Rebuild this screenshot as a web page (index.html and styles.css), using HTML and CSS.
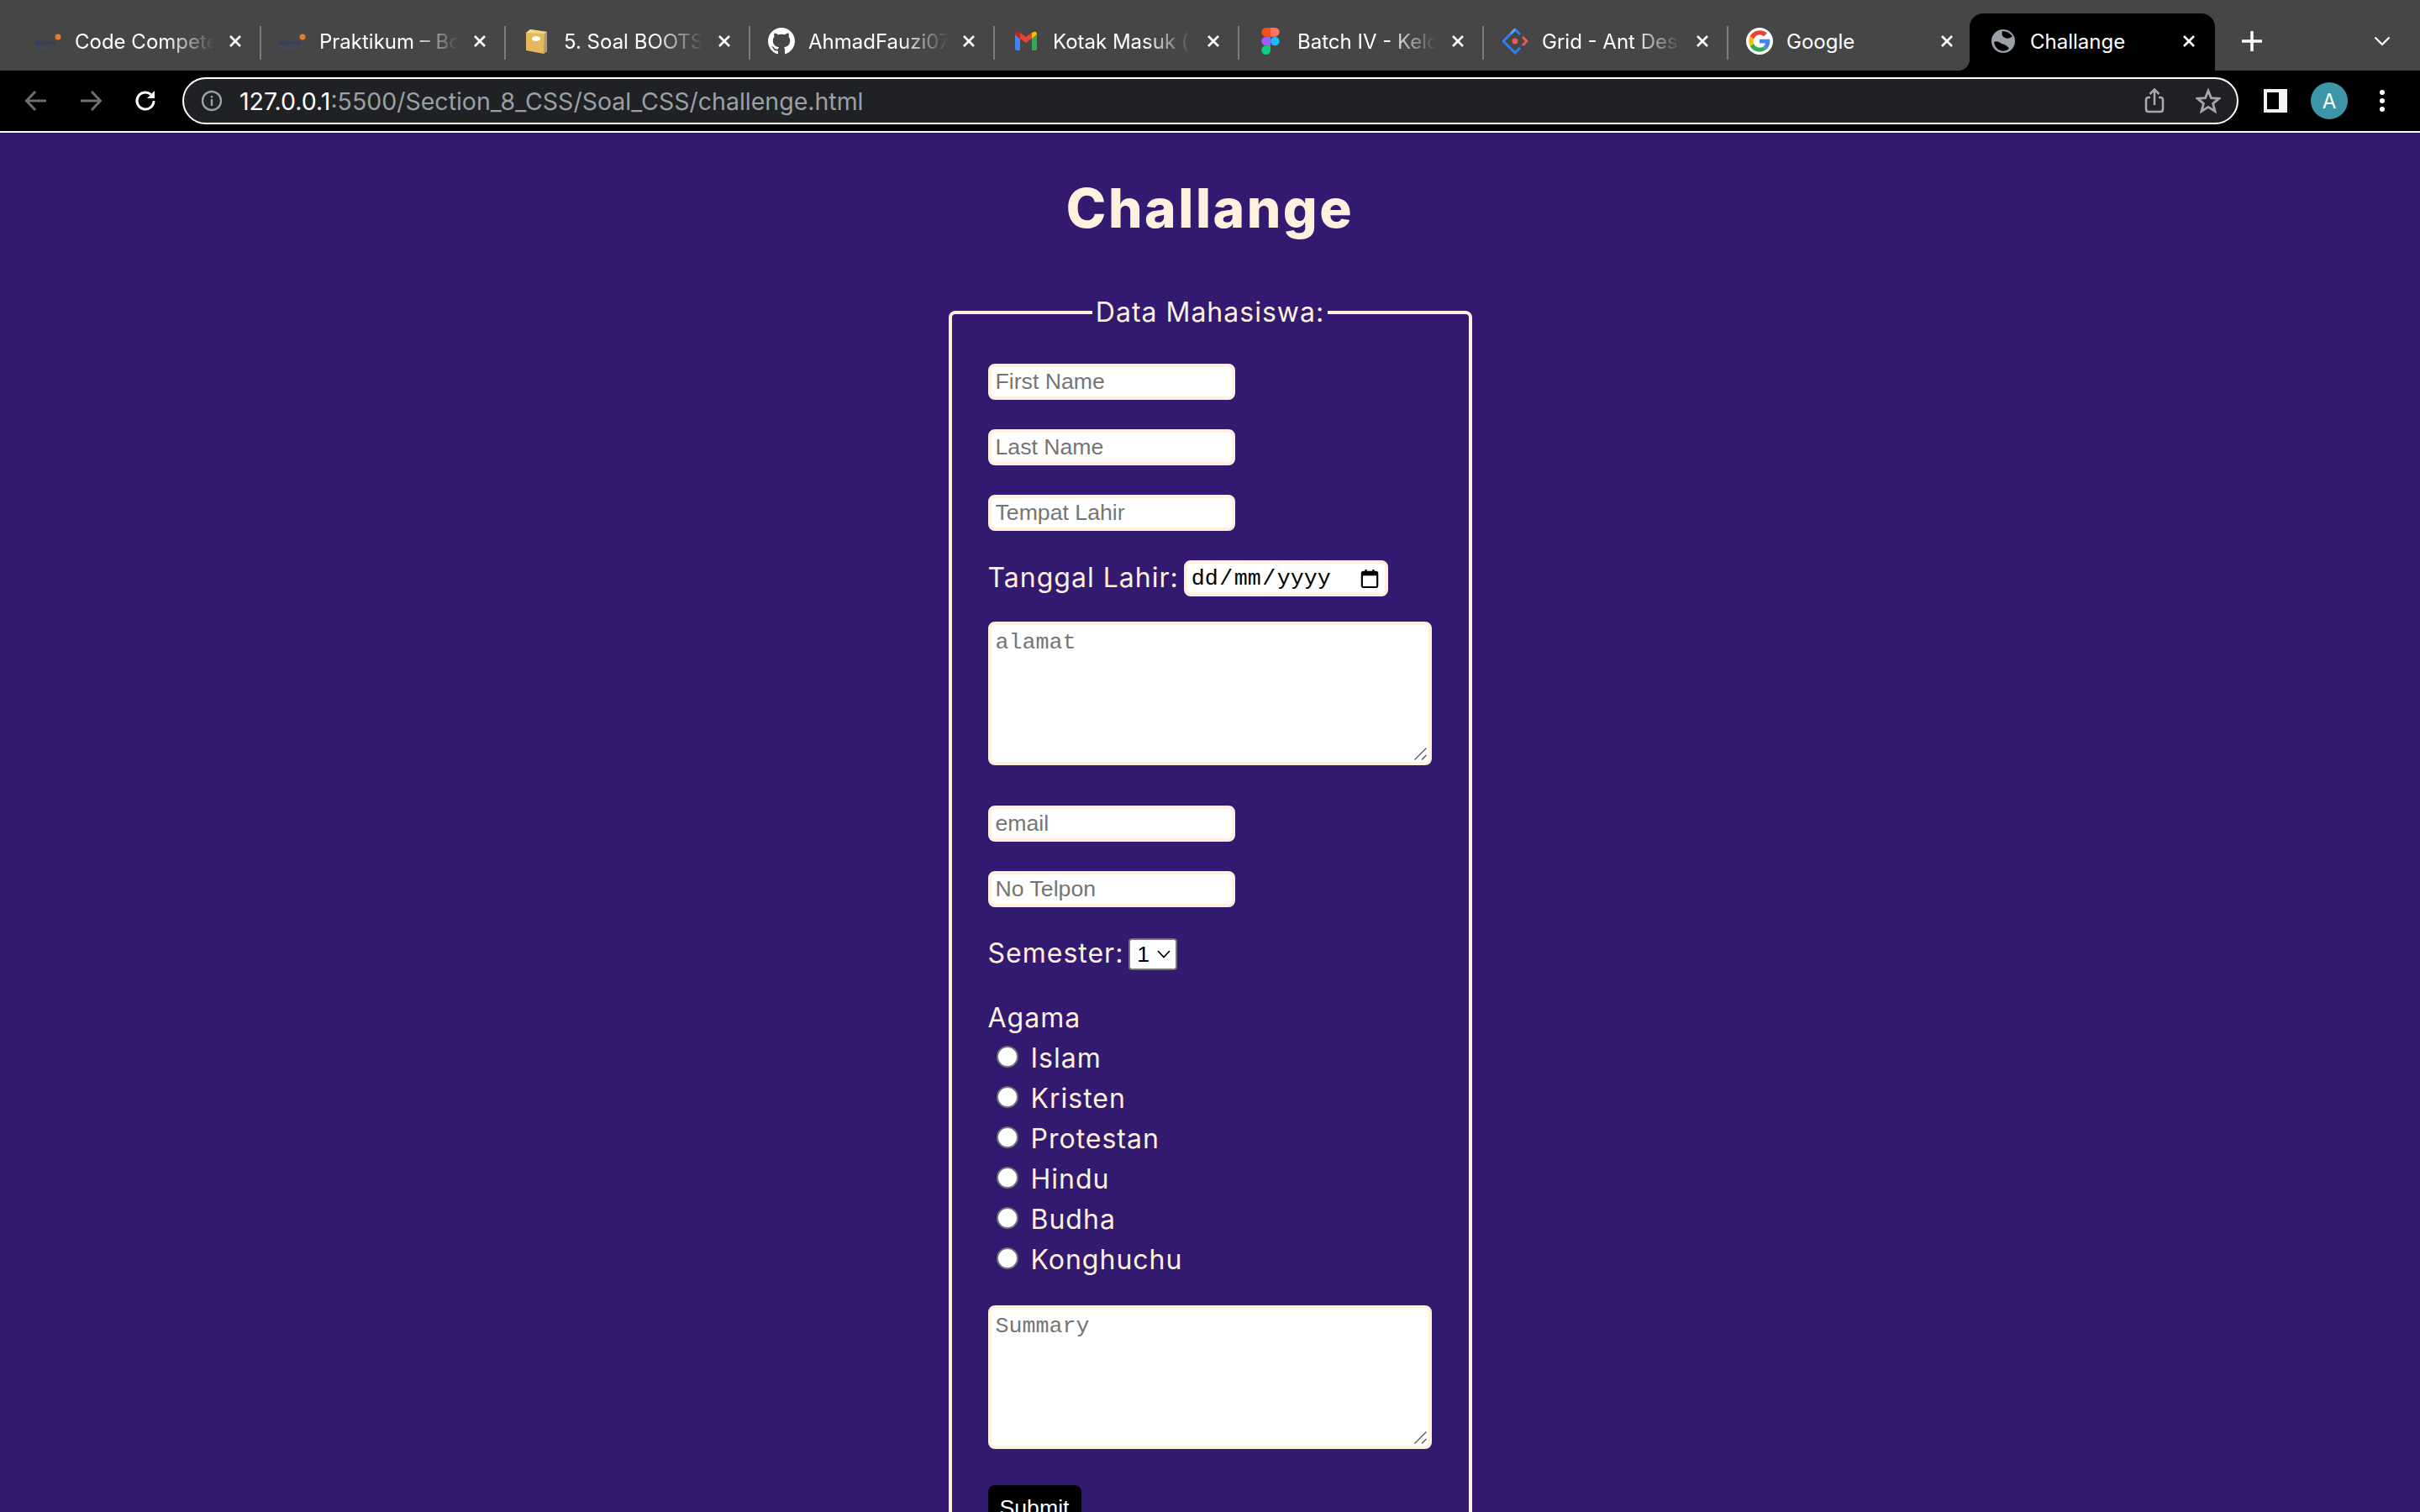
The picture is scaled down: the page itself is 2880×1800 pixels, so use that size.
FILE: index.html
```html
<!DOCTYPE HTML>
<html>
    <head>
        <title>Challange</title>
        <link rel="stylesheet" href="styles.css">
    </head>

    <body>
        <div class="tabstrip">
            <div class="tab">
                <svg class="favicon" viewBox="0 0 32 32"><text x="0" y="20" font-size="8" font-family="Liberation Sans" font-weight="700" fill="#2a3a72">alterra</text><circle cx="28" cy="11" r="3.5" fill="#e8792e"/><rect x="1" y="24" width="20" height="2" fill="#3f4a63"/></svg>
                <span class="tab-title">Code Compete</span>
                <svg class="tab-close" viewBox="0 0 16 16"><path d="M2 2L14 14M14 2L2 14" stroke="#fff" stroke-width="2.6"/></svg>
            </div>
            <div class="tab">
                <svg class="favicon" viewBox="0 0 32 32"><text x="0" y="20" font-size="8" font-family="Liberation Sans" font-weight="700" fill="#2a3a72">alterra</text><circle cx="28" cy="11" r="3.5" fill="#e8792e"/><rect x="1" y="24" width="20" height="2" fill="#3f4a63"/></svg>
                <span class="tab-title">Praktikum – Bo</span>
                <svg class="tab-close" viewBox="0 0 16 16"><path d="M2 2L14 14M14 2L2 14" stroke="#fff" stroke-width="2.6"/></svg>
            </div>
            <div class="tab">
                <svg class="favicon" viewBox="0 0 32 32"><path d="M3 6L8 2L28 5V28L24 31L3 27Z" fill="#e6b85c"/><path d="M25 5H28V28L24 31Z" fill="#a89a7c"/><path d="M3 6L8 2L28 5L25 7Z" fill="#f3d68e"/><ellipse cx="15" cy="13" rx="5" ry="3" fill="#fff"/></svg>
                <span class="tab-title">5. Soal BOOTS</span>
                <svg class="tab-close" viewBox="0 0 16 16"><path d="M2 2L14 14M14 2L2 14" stroke="#fff" stroke-width="2.6"/></svg>
            </div>
            <div class="tab">
                <svg class="favicon" viewBox="0 0 16 16"><path fill="#fff" d="M8 0C3.58 0 0 3.58 0 8c0 3.54 2.29 6.53 5.47 7.59.4.07.55-.17.55-.38 0-.19-.01-.82-.01-1.49-2.01.37-2.53-.49-2.69-.94-.09-.23-.48-.94-.82-1.13-.28-.15-.68-.52-.01-.53.63-.01 1.08.58 1.23.82.72 1.21 1.87.87 2.33.66.07-.52.28-.87.51-1.07-1.78-.2-3.64-.89-3.64-3.95 0-.87.31-1.59.82-2.15-.08-.2-.36-1.02.08-2.12 0 0 .67-.21 2.2.82.64-.18 1.32-.27 2-.27s1.36.09 2 .27c1.53-1.04 2.2-.82 2.2-.82.44 1.1.16 1.92.08 2.12.51.56.82 1.27.82 2.15 0 3.07-1.87 3.75-3.65 3.95.29.25.54.73.54 1.48 0 1.07-.01 1.93-.01 2.2 0 .21.15.46.55.38A8.01 8.01 0 0 0 16 8c0-4.42-3.58-8-8-8z"/></svg>
                <span class="tab-title">AhmadFauzi07</span>
                <svg class="tab-close" viewBox="0 0 16 16"><path d="M2 2L14 14M14 2L2 14" stroke="#fff" stroke-width="2.6"/></svg>
            </div>
            <div class="tab">
                <svg class="favicon" viewBox="0 0 32 32"><path d="M3 8V25Q3 27 5 27H9V13Z" fill="#4285f4"/><path d="M23 13V27H27Q29 27 29 25V8Z" fill="#34a853"/><path d="M9 13L16 18L23 13V6L16 11L9 6Z" fill="#ea4335"/><path d="M3 8Q3 4 7 5L9 6V13Z" fill="#c5221f"/><path d="M23 6L25 5Q29 4 29 8L23 13Z" fill="#fbbc04"/></svg>
                <span class="tab-title">Kotak Masuk (</span>
                <svg class="tab-close" viewBox="0 0 16 16"><path d="M2 2L14 14M14 2L2 14" stroke="#fff" stroke-width="2.6"/></svg>
            </div>
            <div class="tab">
                <svg class="favicon" viewBox="0 0 20 30"><path d="M10 0H5a5 5 0 0 0 0 10h5z" fill="#f24e1e"/><path d="M10 0h5a5 5 0 0 1 0 10h-5z" fill="#ff7262"/><path d="M10 10H5a5 5 0 0 0 0 10h5z" fill="#a259ff"/><circle cx="15" cy="15" r="5" fill="#1abcfe"/><path d="M10 20H5a5 5 0 1 0 5 5z" fill="#0acf83"/></svg>
                <span class="tab-title">Batch IV - Kelo</span>
                <svg class="tab-close" viewBox="0 0 16 16"><path d="M2 2L14 14M14 2L2 14" stroke="#fff" stroke-width="2.6"/></svg>
            </div>
            <div class="tab">
                <svg class="favicon" viewBox="0 0 32 32"><path d="M22 8L16 2L2 16L16 30L22 24" fill="none" stroke="#2f7ff5" stroke-width="3"/><path d="M16 2L11 7" stroke="#5aa0fa" stroke-width="3"/><path d="M25 11L30 16L25 21" fill="none" stroke="#e65a5a" stroke-width="3"/><circle cx="16" cy="16" r="3.5" fill="#e65a5a"/></svg>
                <span class="tab-title">Grid - Ant Des</span>
                <svg class="tab-close" viewBox="0 0 16 16"><path d="M2 2L14 14M14 2L2 14" stroke="#fff" stroke-width="2.6"/></svg>
            </div>
            <div class="tab tab-plain">
                <svg class="favicon" viewBox="0 0 48 48"><circle cx="24" cy="24" r="24" fill="#fff"/><path fill="#EA4335" d="M24 12.5c3 0 5.6 1 7.700 3l5.600-5.600C33.900 6.700 29.400 5 24 5 16.600 5 10.200 9.200 7.100 15.400l6.500 5.100C15.200 15.800 19.200 12.500 24 12.500z"/><path fill="#4285F4" d="M42.500 24.500c0-1.300-.1-2.500-.3-3.700H24v7.100h10.400c-.5 2.400-1.800 4.400-3.800 5.700l6 4.700c3.500-3.200 5.900-8 5.900-13.800z"/><path fill="#FBBC05" d="M13.600 27.500c-.4-1.100-.6-2.300-.6-3.500s.2-2.400.6-3.500l-6.500-5.100C5.800 18 5 20.900 5 24s.8 6 2.100 8.600z"/><path fill="#34A853" d="M24 43c5.100 0 9.500-1.700 12.600-4.600l-6-4.700c-1.700 1.100-3.900 1.800-6.600 1.800-4.800 0-8.800-3.200-10.400-7.500l-6.500 5.100C10.200 38.800 16.600 43 24 43z"/></svg>
                <span class="tab-title">Google</span>
                <svg class="tab-close" viewBox="0 0 16 16"><path d="M2 2L14 14M14 2L2 14" stroke="#fff" stroke-width="2.6"/></svg>
            </div>
            <div class="tab tab-active">
                <svg class="favicon" viewBox="0 0 32 32"><circle cx="16" cy="16" r="14" fill="#9aa0a6"/><path d="M15 4Q22 4 27 10Q23 14 18 12Q13 10 15 4Z" fill="#000"/><path d="M5 17Q10 15 14 19Q20 20 23 25Q17 30 10 26Q6 23 5 17Z" fill="#000"/></svg>
                <span class="tab-title">Challange</span>
                <svg class="tab-close" viewBox="0 0 16 16"><path d="M2 2L14 14M14 2L2 14" stroke="#fff" stroke-width="2.6"/></svg>
            </div>
            <span class="new-tab">
                <svg viewBox="0 0 24 24" width="24" height="24"><path d="M12 0V24M0 12H24" stroke="#fff" stroke-width="3.5"/></svg>
            </span>
            <span class="tab-search">
                <svg viewBox="0 0 20 12" width="20" height="12"><path d="M1.500 1.500L10 10L18.500 1.500" stroke="#fff" stroke-width="2.2" fill="none"/></svg>
            </span>
        </div>

        <div class="toolbar">
            <svg class="nav-icon" viewBox="0 0 28 28"><path d="M26 14H3M13 3L2.500 14L13 25" stroke="#6e7074" stroke-width="3" fill="none"/></svg>
            <svg class="nav-icon" viewBox="0 0 28 28"><path d="M2 14H25M15 3L25.500 14L15 25" stroke="#6e7074" stroke-width="3" fill="none"/></svg>
            <svg class="nav-icon nav-reload" viewBox="0 0 28 28"><path d="M24 14A10 10 0 1 1 20.500 6.400" stroke="#fff" stroke-width="3" fill="none"/><path d="M25 2V11H16Z" fill="#fff"/></svg>
            <div class="omnibox">
                <svg class="info-icon" viewBox="0 0 26 26"><circle cx="13" cy="13" r="11" stroke="#9aa0a6" stroke-width="2.4" fill="none"/><rect x="11.800" y="11" width="2.4" height="8" fill="#9aa0a6"/><rect x="11.800" y="7" width="2.4" height="2.5" fill="#9aa0a6"/></svg>
                <span class="url"><span class="url-host">127.0.0.1</span>:5500/Section_8_CSS/Soal_CSS/challenge.html</span>
                <svg class="omni-icon" viewBox="0 0 26 30"><path d="M8 11H6Q3 11 3 14V25Q3 28 6 28H20Q23 28 23 25V14Q23 11 20 11H18" stroke="#a8a8a8" stroke-width="2.6" fill="none"/><path d="M13 20V2M7.500 7L13 1.500L18.500 7" stroke="#a8a8a8" stroke-width="2.6" fill="none"/></svg>
                <svg class="omni-icon omni-star" viewBox="0 0 30 30"><path d="M15 3L18.500 11.700L27.800 12.300L20.600 18.300L23 27.400L15 22.400L7 27.400L9.400 18.300L2.200 12.300L11.500 11.700Z" stroke="#a8a8a8" stroke-width="2.8" fill="none"/></svg>
            </div>
            <svg class="panel-icon" viewBox="0 0 28 28"><rect width="28" height="28" fill="#f1f3f4"/><rect x="4" y="4" width="14" height="20" fill="#000"/></svg>
            <div class="avatar">A</div>
            <svg class="dots" viewBox="0 0 8 28"><circle cx="4" cy="4" r="3" fill="#fff"/><circle cx="4" cy="14" r="3" fill="#fff"/><circle cx="4" cy="24" r="3" fill="#fff"/></svg>
        </div>

        <div class="page">
            <h1>Challange</h1>

            <form class="card">
                <fieldset>
                    <legend>Data Mahasiswa:</legend>

                    <input class="field" type="text" placeholder="First Name">
                    <input class="field" type="text" placeholder="Last Name">
                    <input class="field" type="text" placeholder="Tempat Lahir">

                    <div class="row">
                        <label>Tanggal Lahir:</label>
                        <div class="date-field">
                            <span class="date-text">dd<i>/</i>mm<i>/</i>yyyy</span>
                            <svg viewBox="0 0 24 24" width="22" height="22"><path d="M4 3H20A2 2 0 0 1 22 5V21A2 2 0 0 1 20 23H4A2 2 0 0 1 2 21V5A2 2 0 0 1 4 3Z" fill="none" stroke="#000" stroke-width="2.4"/><rect x="2" y="3" width="20" height="5" fill="#000"/><rect x="6" y="0" width="2.4" height="4" fill="#000"/><rect x="15.600" y="0" width="2.4" height="4" fill="#000"/></svg>
                        </div>
                    </div>

                    <div class="area-wrap">
                        <textarea class="area" placeholder="alamat"></textarea>
                        <svg class="grip" viewBox="0 0 15 15"><path d="M0.500 14.500L14.500 0.500M9 14.500L14.500 9" stroke="#555" stroke-width="1.3"/></svg>
                    </div>

                    <input class="field" type="text" placeholder="email">
                    <input class="field" type="text" placeholder="No Telpon">

                    <div class="row row-select">
                        <label>Semester:</label>
                        <div class="select-box">
                            <span>1</span>
                            <svg viewBox="0 0 16 10" width="16" height="10"><path d="M1 1L8 8.500L15 1" stroke="#000" stroke-width="1.8" fill="none"/></svg>
                        </div>
                    </div>

                    <div class="agama">
                        <div class="agama-title">Agama</div>
                        <label class="radio"><input type="radio" name="agama"><span>Islam</span></label>
                        <label class="radio"><input type="radio" name="agama"><span>Kristen</span></label>
                        <label class="radio"><input type="radio" name="agama"><span>Protestan</span></label>
                        <label class="radio"><input type="radio" name="agama"><span>Hindu</span></label>
                        <label class="radio"><input type="radio" name="agama"><span>Budha</span></label>
                        <label class="radio"><input type="radio" name="agama"><span>Konghuchu</span></label>
                    </div>

                    <div class="area-wrap area-wrap-last">
                        <textarea class="area" placeholder="Summary"></textarea>
                        <svg class="grip" viewBox="0 0 15 15"><path d="M0.500 14.500L14.500 0.500M9 14.500L14.500 9" stroke="#555" stroke-width="1.3"/></svg>
                    </div>

                    <button class="submit" type="button">Submit</button>
                </fieldset>
            </form>
        </div>
    </body>
</html>
```

FILE: styles.css
```css
html, body {
    height: 100%;
}
body {
    margin: 0;
    overflow: hidden;
    background-color: #321a70;
    font-family: "Liberation Sans", sans-serif;
    display: flex;
    flex-direction: column;
}

/* browser tabs */
.tabstrip {
    height: 84px;
    flex: none;
    background: #464646;
    display: flex;
    padding-left: 20px;
    align-items: flex-end;
    box-sizing: border-box;
}
.tab {
    width: 291px;
    height: 68px;
    flex: none;
    box-sizing: border-box;
    padding: 0 20px 2px 21px;
    display: flex;
    align-items: center;
    color: #fff;
    position: relative;
}
.tab::after {
    content: "";
    position: absolute;
    right: 0;
    top: 15px;
    height: 40px;
    width: 2px;
    background: #7d7d7d;
}
.tab-plain::after, .tab-active::after {
    display: none;
}
.favicon {
    width: 32px;
    height: 32px;
    flex: none;
    margin-right: 16px;
}
.tab-title {
    width: 166px;
    flex: none;
    white-space: nowrap;
    font-family: Inter, sans-serif;
    font-size: 24px;
    -webkit-mask-image: linear-gradient(to right, #000 65%, transparent 100%);
    mask-image: linear-gradient(to right, #000 65%, transparent 100%);
}
.tab-close {
    width: 16px;
    height: 16px;
    flex: none;
    margin-left: auto;
    margin-right: 3px;
}
.tab-plain .tab-title, .tab-active .tab-title {
    -webkit-mask-image: none;
    mask-image: none;
}
.tab-active {
    width: 292px;
    margin-left: -4px;
    padding-left: 24px;
    background: #000;
    border-radius: 16px 16px 0 0;
}
.tab-active::before {
    content: "";
    position: absolute;
    left: -14px;
    bottom: 0;
    width: 14px;
    height: 14px;
    background: radial-gradient(circle at 0 0, #464646 14px, #000 14.5px);
}
.new-tab, .tab-search {
    display: flex;
    align-items: center;
    height: 68px;
    padding-bottom: 2px;
    box-sizing: border-box;
}
.new-tab {
    margin-left: 32px;
}
.tab-search {
    margin-left: 133px;
}

/* toolbar under tabs */
.toolbar {
    height: 72px;
    flex: none;
    background: #000;
    border-bottom: 2px solid #fff;
    display: flex;
    align-items: center;
    padding-left: 29px;
}
.nav-icon {
    width: 28px;
    height: 28px;
    flex: none;
    margin-right: 37px;
}
.nav-reload {
    margin-right: 30px;
}
.omnibox {
    width: 2447px;
    height: 56px;
    flex: none;
    box-sizing: border-box;
    background: #202124;
    border: 2px solid #fff;
    border-radius: 28px;
    display: flex;
    align-items: center;
    padding: 0 19px 0 20px;
}
.info-icon {
    width: 26px;
    height: 26px;
    flex: none;
    margin-right: 20px;
}
.url {
    flex: 1;
    color: #9aa0a6;
    font-family: Inter, sans-serif;
    font-size: 28.5px;
}
.url-host {
    color: #fff;
}
.omni-icon {
    width: 26px;
    height: 30px;
    flex: none;
    margin-right: 36px;
}
.omni-star {
    width: 30px;
    margin-right: 0;
}
.panel-icon {
    width: 28px;
    height: 28px;
    flex: none;
    margin-left: 30px;
}
.avatar {
    width: 44px;
    height: 44px;
    flex: none;
    border-radius: 50%;
    background: #3e95a8;
    color: #fff;
    font-family: Inter, sans-serif;
    font-size: 24px;
    display: flex;
    align-items: center;
    justify-content: center;
    margin-left: 28px;
}
.dots {
    width: 8px;
    height: 28px;
    flex: none;
    margin-left: 37px;
}

/* page content */
.page {
    flex: 1;
    min-height: 0;
    color: #fff1de;
    font-family: Inter, sans-serif;
}
h1 {
    margin: 0;
    padding-top: 44px;
    font-size: 64px;
    line-height: 92px;
    font-weight: 800;
    text-align: center;
    letter-spacing: 2.5px;
}
.card {
    width: 623px;
    margin: 58px auto 0;
}
fieldset {
    margin: 0;
    padding: 41px 43px 60px;
    border: 4px solid #fff1de;
    border-radius: 8px;
    display: flex;
    flex-direction: column;
    align-items: flex-start;
}
legend {
    padding: 0 4px;
    margin: 0 auto;
    font-size: 32px;
    line-height: 40px;
    letter-spacing: 1px;
}
.field {
    width: 294px;
    height: 43px;
    box-sizing: border-box;
    padding: 0 5px;
    margin-bottom: 35px;
    border: 4px solid #fff1de;
    border-radius: 8px;
    background: #fff;
    font-family: "Liberation Sans", sans-serif;
    font-size: 26.67px;
    outline: none;
}
.field::placeholder, .area::placeholder {
    color: #757575;
}
.row {
    display: flex;
    align-items: center;
    gap: 6px;
    margin-bottom: 30px;
    font-size: 32px;
    letter-spacing: 1px;
}
.row label {
    line-height: 36px;
    margin-bottom: 2px;
}
.row-select {
    margin-top: 2px;
}
.date-field {
    width: 243px;
    height: 43px;
    box-sizing: border-box;
    border: 4px solid #fff1de;
    border-radius: 8px;
    background: #fff;
    color: #000;
    font-family: "Liberation Mono", monospace;
    font-size: 26.67px;
    letter-spacing: 0;
    display: flex;
    align-items: center;
    justify-content: space-between;
    padding: 0 7px 0 5px;
}
.date-text i {
    font-style: normal;
    margin: 0 1.5px;
}
.area-wrap {
    position: relative;
    width: 528px;
    height: 171px;
    margin-bottom: 48px;
}
.area-wrap-last {
    margin-bottom: 43px;
}
.area {
    display: block;
    width: 100%;
    height: 100%;
    box-sizing: border-box;
    padding: 6px 4px 4px 5px;
    border: 4px solid #fff1de;
    border-radius: 8px;
    background: #fff;
    font-family: "Liberation Mono", monospace;
    font-size: 26.67px;
    outline: none;
    resize: none;
}
.grip {
    position: absolute;
    right: 6px;
    bottom: 6px;
    width: 15px;
    height: 15px;
}
.select-box {
    width: 58px;
    height: 38px;
    box-sizing: border-box;
    border: 2px solid #767676;
    border-radius: 4px;
    background: #fff;
    color: #000;
    font-family: "Liberation Sans", sans-serif;
    font-size: 26.67px;
    letter-spacing: 0;
    display: flex;
    align-items: center;
    justify-content: space-between;
    padding: 0 6px 0 8px;
}
.agama {
    margin-top: 1px;
    margin-bottom: 32px;
}
.agama-title {
    height: 48px;
    font-size: 32px;
    line-height: 52px;
    letter-spacing: 1px;
}
.radio {
    display: flex;
    align-items: center;
    height: 48px;
    font-size: 32px;
    letter-spacing: 1px;
}
.radio span {
    padding-top: 2px;
}
.radio input {
    appearance: none;
    width: 26px;
    height: 26px;
    margin: 0 15px 0 10px;
    box-sizing: border-box;
    border: 2px solid #767676;
    border-radius: 50%;
    background: #fff;
}
.submit {
    width: 111px;
    height: 54px;
    flex: none;
    border: none;
    border-radius: 8px;
    background: #000;
    color: #fff;
    font-family: "Liberation Sans", sans-serif;
    font-size: 26.67px;
}
```
